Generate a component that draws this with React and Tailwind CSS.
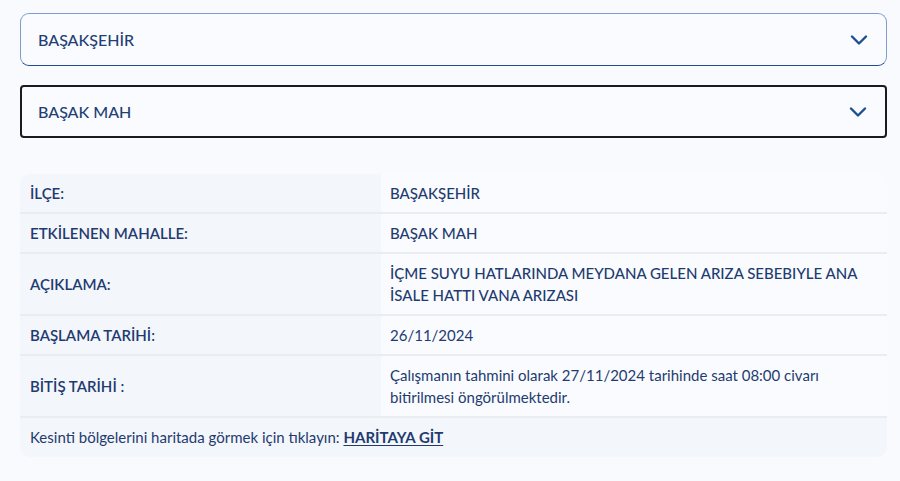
import { ChevronDown } from "lucide-react";

const rows = [
  { label: "İLÇE:", value: "BAŞAKŞEHİR", upper: true },
  { label: "ETKİLENEN MAHALLE:", value: "BAŞAK MAH", upper: true },
  {
    label: "AÇIKLAMA:",
    value: "İÇME SUYU HATLARINDA MEYDANA GELEN ARIZA SEBEBIYLE ANA İSALE HATTI VANA ARIZASI",
    upper: true,
  },
  { label: "BAŞLAMA TARİHİ:", value: "26/11/2024" },
  {
    label: "BİTİŞ TARİHİ :",
    value: "Çalışmanın tahmini olarak 27/11/2024 tarihinde saat 08:00 civarı bitirilmesi öngörülmektedir.",
  },
];

const Select = ({ value, className }) => (
  <div
    className={`flex items-center justify-between h-[53px] pr-[13px] bg-[#fafbfe] ${className}`}
  >
    <span className="text-[16px] font-medium text-[#1f3f75]">{value}</span>
    <ChevronDown className="w-7 h-7 text-[#1d4f94]" strokeWidth={2.1} />
  </div>
);

export default function App() {
  return (
    <div
      className="min-h-[481px] bg-[#f9fafd] pt-[13px] pl-5"
      style={{ fontFamily: "Lato, 'Noto Sans', sans-serif" }}
    >
      <div className="w-[867px]">
        <Select
          value="BAŞAKŞEHİR"
          className="pl-[17px] rounded-[9px] border border-[#7f9dcc] border-b-[#1f4d95]"
        />
        <Select
          value="BAŞAK MAH"
          className="pl-[16px] mt-[19px] rounded-[4px] border-2 border-[#1b1b1b]"
        />

        <div className="mt-[36px] rounded-[10px] overflow-hidden text-[15px] leading-[22px] text-[#1f3b70]">
          {rows.map((r) => (
            <div key={r.label} className="flex border-b-2 border-[#e9ecf1]">
              <div className="w-[361px] shrink-0 bg-[#f3f6fb] pl-[10px] py-[8px] flex items-center font-semibold">
                {r.label}
              </div>
              <div
                className={`flex-1 bg-[#f9fbfe] pl-[9px] pr-[20px] py-[8px] flex items-center ${
                  r.upper ? "font-medium" : ""
                }`}
              >
                {r.value}
              </div>
            </div>
          ))}
          <div className="bg-[#f3f6fb] pl-[10px] py-[8px] h-[39px]">
            Kesinti bölgelerini haritada görmek için tıklayın:{" "}
            <a href="#" className="font-bold underline underline-offset-2">
              HARİTAYA GİT
            </a>
          </div>
        </div>
      </div>
    </div>
  );
}
